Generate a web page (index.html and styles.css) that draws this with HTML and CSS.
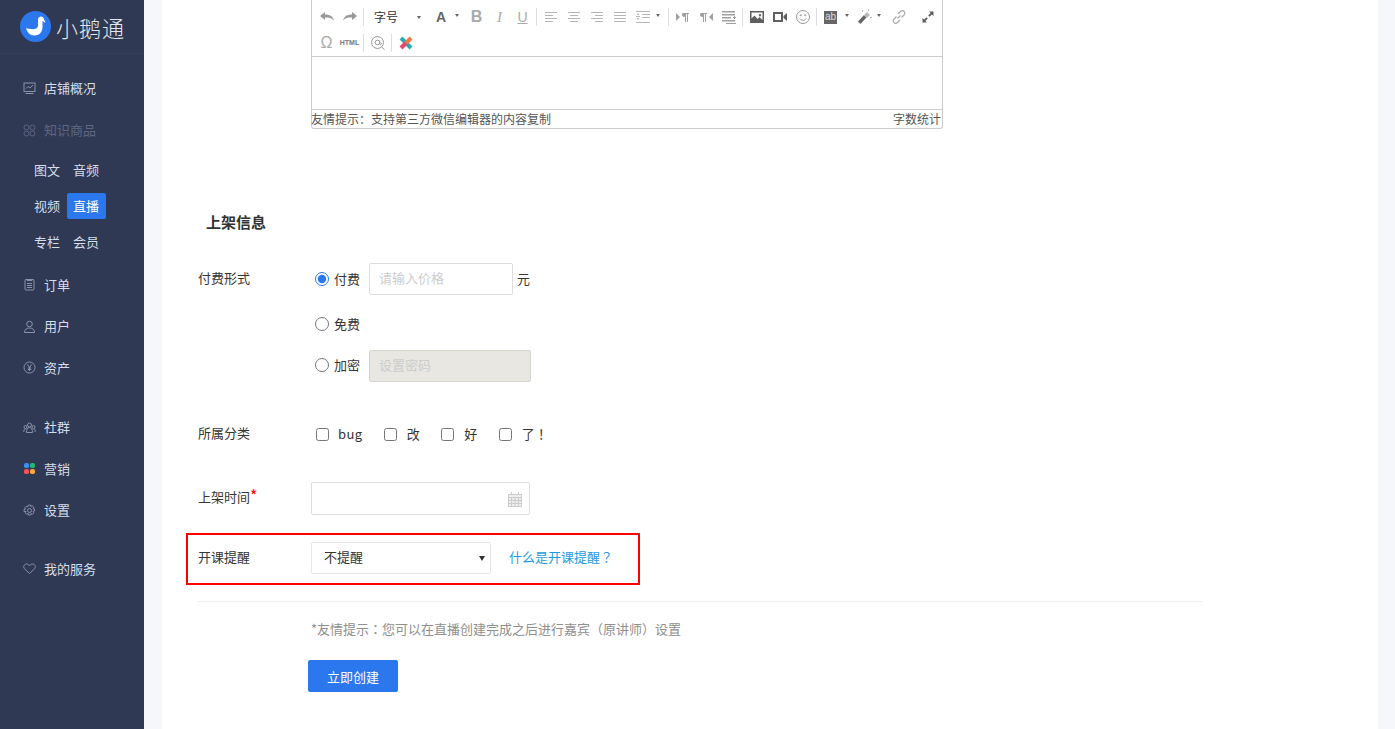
FILE: index.html
```html
<!DOCTYPE html>
<html lang="zh-CN">
<head>
    <meta charset="UTF-8">
    <meta name="viewport" content="width=device-width, initial-scale=1.0">
    <title>小鹅通</title>
    <link rel="stylesheet" href="styles.css">
</head>
<body>
<aside class="sidebar">
    <div class="logo">
        <svg class="logo-mark" width="31" height="31" viewBox="0 0 31 31">
            <circle cx="15.500" cy="15.500" r="15.500" fill="#2b77ee"/>
            <path d="M6 17c3 1.200 7 1.500 9.500.8 2-.6 2.500-2 2.500-4V9c0-2 1.300-3.500 3-3.500 1.500 0 2.500 1 3 2.500l1.500 4-3-2v6c0 5-3.500 8.500-8 8.500-4.500 0-8-3.500-8.500-8.500z" fill="#fff"/>
        </svg>
        <span class="logo-text">小鹅通</span>
    </div>
    <nav class="menu">
        <a class="menu-item">
            <svg class="menu-icon" viewBox="0 0 13 13" fill="none" stroke="#8a93aa"><rect x="1" y="1" width="11" height="8.500"/><path d="M3 6.500l2-2 2 1.500 3-3M2.500 11.500h8"/></svg>
            店铺概况
        </a>
        <a class="menu-item is-disabled">
            <svg class="menu-icon" viewBox="0 0 13 13" fill="none" stroke="#5d6783"><circle cx="3.500" cy="3.500" r="2.500"/><circle cx="9.500" cy="3.500" r="2.500"/><circle cx="3.500" cy="9.500" r="2.500"/><circle cx="9.500" cy="9.500" r="2.500"/></svg>
            知识商品
        </a>
        <div class="submenu">
            <a class="sub-item">图文</a><a class="sub-item">音频</a>
            <a class="sub-item">视频</a><a class="sub-item is-active">直播</a>
            <a class="sub-item">专栏</a><a class="sub-item">会员</a>
        </div>
        <div class="menu-group">
            <a class="menu-item">
                <svg class="menu-icon" viewBox="0 0 13 13" fill="none" stroke="#8a93aa"><rect x="2" y="1.500" width="9" height="10.500" rx="1"/><path d="M4 1v1.500h5V1M4 5.500h5M4 7.500h5M4 9.500h5"/></svg>
                订单
            </a>
            <a class="menu-item">
                <svg class="menu-icon" viewBox="0 0 13 13" fill="none" stroke="#8a93aa"><circle cx="6.500" cy="4" r="2.800"/><path d="M1.500 12.500c0-3 2-4.500 5-4.500s5 1.500 5 4.500z"/></svg>
                用户
            </a>
            <a class="menu-item">
                <svg class="menu-icon" viewBox="0 0 13 13" fill="none" stroke="#8a93aa"><circle cx="6.500" cy="6.500" r="5.500"/><path d="M4.500 3.500l2 3 2-3M6.500 6.500v3.500M4.800 7h3.400M4.800 8.500h3.400"/></svg>
                资产
            </a>
        </div>
        <div class="menu-group">
            <a class="menu-item">
                <svg class="menu-icon" viewBox="0 0 13 13" fill="none" stroke="#8a93aa"><circle cx="6.500" cy="4" r="2"/><circle cx="2.500" cy="6" r="1.500"/><circle cx="10.500" cy="6" r="1.500"/><path d="M3.500 11.500c0-3 1-5 3-5s3 2 3 5zM1 11c-.5-1.500 0-3 1.500-3M12 11c.5-1.500 0-3-1.500-3"/></svg>
                社群
            </a>
            <a class="menu-item">
                <svg class="menu-icon" viewBox="0 0 13 13"><rect x="1" y="1" width="5" height="5" rx="1.800" fill="#3f8ef0"/><rect x="7" y="1" width="5" height="5" rx="1.800" fill="#25b772"/><rect x="1" y="7" width="5" height="5" rx="1.800" fill="#f0555a"/><rect x="7" y="7" width="5" height="5" rx="1.800" fill="#f5a83c"/></svg>
                营销
            </a>
            <a class="menu-item">
                <svg class="menu-icon" viewBox="0 0 13 13" fill="none" stroke="#8a93aa"><circle cx="6.500" cy="6.500" r="2"/><path d="M5.500 1h2l.4 1.500 1.400-.7 1.500 1.500-.8 1.300 1.500.4v2l-1.500.4.800 1.400-1.500 1.500-1.400-.8-.4 1.500h-2l-.4-1.500-1.400.8-1.500-1.500.8-1.400L1 7.500v-2l1.500-.4-.8-1.300 1.500-1.500 1.400.7z"/></svg>
                设置
            </a>
        </div>
        <div class="menu-group">
            <a class="menu-item">
                <svg class="menu-icon" viewBox="0 0 13 13" fill="none" stroke="#8a93aa"><path d="M6.500 11.500L1.500 6.800C0 5 .8 2 3.500 2c1.300 0 2.300.7 3 1.800C7.200 2.700 8.200 2 9.500 2c2.700 0 3.500 3 2 4.800z"/></svg>
                我的服务
            </a>
        </div>
    </nav>
</aside>

<main class="content">
    <div class="card">
        <div class="editor">
            <div class="toolbar">
                <div class="tb-row">
                    <span class="tb-btn"><svg class="tb-icon" viewBox="0 0 16 16"><path d="M1 7l5-4v2.500c5 0 8 2 9 6-2-2.500-5-3-9-3V11z"/></svg></span>
                    <span class="tb-btn"><svg class="tb-icon" viewBox="0 0 16 16"><path d="M15 7l-5-4v2.500c-5 0-8 2-9 6 2-2.500 5-3 9-3V11z"/></svg></span>
                    <span class="tb-sep"></span>
                    <span class="tb-font">字号<i class="caret"></i></span>
                    <span class="tb-btn has-caret"><span class="tb-letter tb-a">A</span><i class="caret"></i></span>
                    <span class="tb-btn"><span class="tb-letter tb-b">B</span></span>
                    <span class="tb-btn"><span class="tb-letter tb-i">I</span></span>
                    <span class="tb-btn"><span class="tb-letter tb-u">U</span></span>
                    <span class="tb-sep"></span>
                    <span class="tb-btn"><svg class="tb-icon light" viewBox="0 0 16 16"><path d="M2 3h12v1H2zM2 6h8v1H2zM2 9h12v1H2zM2 12h8v1H2z"/></svg></span>
                    <span class="tb-btn"><svg class="tb-icon light" viewBox="0 0 16 16"><path d="M2 3h12v1H2zM4 6h8v1H4zM2 9h12v1H2zM4 12h8v1H4z"/></svg></span>
                    <span class="tb-btn"><svg class="tb-icon light" viewBox="0 0 16 16"><path d="M2 3h12v1H2zM6 6h8v1H6zM2 9h12v1H2zM6 12h8v1H6z"/></svg></span>
                    <span class="tb-btn"><svg class="tb-icon light" viewBox="0 0 16 16"><path d="M2 3h12v1H2zM2 6h12v1H2zM2 9h12v1H2zM2 12h12v1H2z"/></svg></span>
                    <span class="tb-btn has-caret"><svg class="tb-icon light" viewBox="0 0 16 16"><path d="M1 2h14v1H1zM7 5h8v1H7zM7 8h8v1H7zM1 13h14v1H1zM1 7h4v1H1zM3 4l1.500 2h-3zM3 11L1.500 9h3z"/></svg><i class="caret"></i></span>
                    <span class="tb-sep"></span>
                    <span class="tb-btn"><svg class="tb-icon mid" viewBox="0 0 16 16"><path d="M1 4l4 4-4 4zM8 4h6v1h-1v8h-1V5h-1v8h-1V8C8 8 7 7 7 6s0-2 1-2z"/></svg></span>
                    <span class="tb-btn"><svg class="tb-icon mid" viewBox="0 0 16 16"><path d="M15 4l-4 4 4 4zM3 4h6v1H8v8H7V5H6v8H5V8C3 8 2 7 2 6s0-2 1-2z"/></svg></span>
                    <span class="tb-btn"><svg class="tb-icon mid" viewBox="0 0 16 16"><path d="M1 2h13v1.500H1zM1 5h13v1.500H1zM1 8h9v1.500H1zM1 11h13v1.500H1zM5 14h10v1H5zM12 8h1V7h1v1h1v1h-1v1h-1V9h-1z"/></svg></span>
                    <span class="tb-sep"></span>
                    <span class="tb-btn"><svg class="tb-icon dark" viewBox="0 0 16 16"><path fill-rule="evenodd" d="M1 2h14v12H1zM2.500 3.500v6l3-3 3 3.500 2-2 3 3V3.500zM11 5a1.200 1.200 0 100 2.400A1.200 1.200 0 0011 5z"/></svg></span>
                    <span class="tb-btn"><svg class="tb-icon dark" viewBox="0 0 16 16"><path fill-rule="evenodd" d="M1 3h10v10H1zM3 5v6h6V5zM11.500 7L15 4v8l-3.500-3z"/></svg></span>
                    <span class="tb-btn"><svg class="tb-icon line" viewBox="0 0 16 16" stroke="#9a9a9a"><circle cx="8" cy="8" r="6.500"/><circle cx="5.800" cy="6.300" r=".6"/><circle cx="10.200" cy="6.300" r=".6"/><path d="M4.800 9.500c1.500 2.500 5 2.500 6.400 0"/></svg></span>
                    <span class="tb-sep tb-sep-wide"></span>
                    <span class="tb-btn has-caret narrow"><span class="tb-ab">ab</span><i class="caret"></i></span>
                    <span class="tb-btn has-caret"><svg class="tb-icon plain" viewBox="0 0 16 16"><path fill="#666" d="M8 6l2.500 2.500L4.500 15 2 12.500z"/><path fill="#bbb" d="M11 3l3 3-3 3-3-3z"/><path fill="#bbb" d="M6 1h1v2H6zM12 0h1v2h-1zM14 8h2v1h-2z"/></svg><i class="caret"></i></span>
                    <span class="tb-btn"><svg class="tb-icon line" viewBox="0 0 16 16" stroke="#aaa" stroke-width="1.200"><path d="M6.500 9.500l3-3M7 5l2.500-2.500c1-1 2.500-1 3.500 0s1 2.500 0 3.500L10.500 8.500M9 11l-2.500 2.500c-1 1-2.500 1-3.500 0s-1-2.500 0-3.500L5.500 7.500"/></svg></span>
                    <span class="tb-btn tb-expand"><svg class="tb-icon dark" viewBox="0 0 16 16"><path d="M9 2.500h4.500V7l-1.600-1.600-2.400 2.400-1.300-1.300 2.400-2.400zM7 13.500H2.500V9l1.600 1.600 2.400-2.400 1.300 1.300-2.400 2.400z"/></svg></span>
                </div>
                <div class="tb-row">
                    <span class="tb-btn"><span class="tb-letter tb-omega">Ω</span></span>
                    <span class="tb-btn"><span class="tb-html">HTML</span></span>
                    <span class="tb-sep"></span>
                    <span class="tb-btn"><svg class="tb-icon line" viewBox="0 0 16 16" stroke="#999"><circle cx="7.500" cy="7.500" r="6"/><circle cx="7.500" cy="7.500" r="2.300"/><path d="M9.800 5.500v3.500c0 1 1.700 1 1.700-1M11.500 12l3 2.500"/></svg></span>
                    <span class="tb-sep"></span>
                    <span class="tb-btn"><svg class="tb-icon line" viewBox="0 0 16 16" stroke-width="4"><path d="M3 3l10 10" stroke="#2fa8b5"/><path d="M8 8l-5 5" stroke="#e9446a"/><path d="M13 3L8 8" stroke="#ef7b45"/></svg></span>
                </div>
            </div>
            <div class="editor-body"></div>
            <div class="editor-foot">
                <span>友情提示：支持第三方微信编辑器的内容复制</span>
                <span>字数统计</span>
            </div>
        </div>

        <h3 class="section-title">上架信息</h3>

        <div class="form-row row-pay">
            <label class="form-label">付费形式</label>
            <div class="field">
                <label class="radio"><input type="radio" name="pay" checked>付费</label>
                <input class="text-input price-input" type="text" placeholder="请输入价格">
                <span class="unit">元</span>
            </div>
        </div>
        <div class="form-row row-free">
            <span class="form-label"></span>
            <div class="field">
                <label class="radio"><input type="radio" name="pay">免费</label>
            </div>
        </div>
        <div class="form-row row-secret">
            <span class="form-label"></span>
            <div class="field">
                <label class="radio"><input type="radio" name="pay">加密</label>
                <input class="text-input secret-input" type="text" placeholder="设置密码" disabled>
            </div>
        </div>

        <div class="form-row row-category">
            <label class="form-label">所属分类</label>
            <div class="field check-list">
                <label class="check"><input type="checkbox"><span class="check-bug">bug</span></label>
                <label class="check"><input type="checkbox">改</label>
                <label class="check"><input type="checkbox">好</label>
                <label class="check"><input type="checkbox"><span>了<span class="punct" lang="zh-TW">！</span></span></label>
            </div>
        </div>

        <div class="form-row row-time">
            <label class="form-label">上架时间<em class="required">*</em></label>
            <div class="date-field">
                <input class="text-input date-input" type="text">
                <svg class="date-icon" width="14" height="15" viewBox="0 0 14 15" fill="none" stroke="#ccc"><rect x=".5" y="2.500" width="13" height="12" fill="#eee"/><path d="M3.500 0v3M10.500 0v3M.5 5.500h13M.5 8.500h13M.5 11.500h13M3.500 5.500v9M7 5.500v9M10.500 5.500v9"/></svg>
            </div>
        </div>

        <div class="form-row row-remind">
            <label class="form-label">开课提醒</label>
            <div class="select-wrap">
                <select class="remind-select"><option>不提醒</option></select>
            </div>
            <a class="help-link">什么是开课提醒<span class="punct" lang="zh-TW">？</span></a>
        </div>

        <div class="divider"></div>
        <p class="hint">*友情提示<span class="punct" lang="zh-TW">：</span>您可以在直播创建完成之后进行嘉宾（原讲师）设置</p>
        <button class="submit-btn" type="button">立即创建</button>
    </div>
</main>
</body>
</html>
```

FILE: styles.css
```css
* {
    box-sizing: border-box;
}
html, body {
    height: 100%;
}
body {
    margin: 0;
    display: flex;
    overflow: hidden;
    background-color: #f5f7fb;
    color: #353535;
    font-family: "Noto Sans CJK SC", "Noto Sans", sans-serif;
    font-size: 13px;
    line-height: 20px;
}
.punct {
    font-family: "Noto Sans CJK TC", sans-serif;
}

/* sidebar */
.sidebar {
    width: 144px;
    flex-shrink: 0;
    background-color: #2f3954;
}
.logo {
    height: 54px;
    display: flex;
    align-items: center;
    padding-left: 20px;
    gap: 5px;
    border-bottom: 1px solid #363f5a;
}
.logo-text {
    font-size: 22px;
    font-weight: 300;
    letter-spacing: 1px;
    color: #e3e6ec;
}
.menu {
    padding-top: 13px;
}
.menu-item {
    display: flex;
    align-items: center;
    gap: 8px;
    height: 42px;
    padding-left: 23px;
    color: #d5dcec;
}
.menu-item.is-disabled {
    color: #5d6783;
}
.menu-icon {
    width: 13px;
    height: 13px;
}
.submenu {
    display: grid;
    grid-template-columns: 39px 39px;
    grid-auto-rows: 36px;
    align-items: center;
    padding: 1px 0 0 28px;
    margin-bottom: 4px;
}
.sub-item {
    height: 26px;
    padding-right: 1px;
    line-height: 25px;
    text-align: center;
    color: #d5dcec;
}
.sub-item.is-active {
    background-color: #2b77ee;
    color: #fff;
    border-radius: 2px;
}
.menu-group + .menu-group {
    margin-top: 18px;
}
.menu-group + .menu-group:last-child {
    margin-top: 17px;
}
.menu-group .menu-item {
    height: 41.500px;
}

/* main card */
.content {
    flex: 1;
    padding: 0 17px 0 18px;
}
.card {
    height: 100%;
    background-color: #fff;
    padding-left: 36px;
}

/* editor */
.editor {
    width: 632px;
    height: 129px;
    margin-left: 113px;
    border: 1px solid #ccc;
    border-top: none;
    border-radius: 0 0 3px 3px;
    display: flex;
    flex-direction: column;
}
.toolbar {
    height: 57px;
    padding: 4px 0 0 3px;
    border-bottom: 1px solid #ccc;
}
.tb-row {
    display: flex;
    align-items: center;
    height: 26px;
}
.tb-btn {
    position: relative;
    width: 23px;
    height: 26px;
    flex-shrink: 0;
    display: flex;
    align-items: center;
    justify-content: center;
}
.tb-btn.has-caret {
    width: 35px;
    justify-content: flex-start;
    padding-left: 4px;
}
.tb-btn.narrow {
    width: 32px;
}
.tb-icon {
    width: 16px;
    height: 16px;
    fill: #9a9a9a;
}
.tb-icon.light {
    fill: #b5b5b5;
}
.tb-icon.mid {
    fill: #a0a0a0;
}
.tb-icon.dark {
    fill: #5f5f5f;
}
.tb-icon.line {
    fill: none;
}
.tb-sep {
    width: 1px;
    height: 18px;
    margin: 0 2px;
    background-color: #ddd;
    flex-shrink: 0;
}
.tb-sep-wide {
    margin-right: 3px;
}
.tb-expand {
    margin-left: 6px;
}
.tb-font {
    position: relative;
    width: 64px;
    padding-left: 8px;
    font-size: 12px;
    color: #333;
    flex-shrink: 0;
}
.caret {
    position: absolute;
    top: 50%;
    left: 25px;
    margin-top: -3px;
    border: 2.500px solid transparent;
    border-top: 3px solid #666;
    border-bottom: none;
}
.tb-font .caret {
    left: 51px;
    margin-top: -1px;
}
.tb-letter {
    font-family: "Liberation Sans", sans-serif;
    color: #aaa;
}
.tb-a {
    padding-left: 2px;
    font-size: 14px;
    font-weight: bold;
    color: #666;
}
.tb-b {
    font-size: 16px;
    font-weight: bold;
}
.tb-i {
    font-family: "Liberation Serif", serif;
    font-size: 15px;
    font-style: italic;
}
.tb-u {
    font-size: 14px;
    text-decoration: underline;
}
.tb-omega {
    font-size: 16px;
}
.tb-html {
    font-family: "Liberation Sans", sans-serif;
    font-size: 7px;
    font-weight: bold;
    color: #777;
}
.tb-ab {
    width: 13px;
    height: 13px;
    line-height: 12px;
    text-align: center;
    background-color: #666;
    color: #ddd;
    font-family: "Liberation Sans", sans-serif;
    font-size: 10px;
}
.editor-body {
    height: 53px;
    border-bottom: 1px solid #ccc;
}
.editor-foot {
    flex: 1;
    display: flex;
    justify-content: space-between;
    padding-right: 1px;
    margin-left: -1px;
    line-height: 18px;
    font-size: 12px;
    color: #555;
}

/* form */
.section-title {
    margin: 83px 0 31px 8px;
    font-size: 15px;
    line-height: 20px;
    font-weight: bold;
    color: #333;
}
.form-row {
    display: flex;
    align-items: center;
}
.form-label {
    width: 113px;
    flex-shrink: 0;
    margin-top: -2px;
    color: #353535;
}
.required {
    color: #f00;
    font-style: normal;
    font-size: 16px;
    line-height: 0;
}
.field {
    display: flex;
    align-items: center;
    padding-left: 4px;
}
.radio {
    display: flex;
    align-items: center;
    gap: 5px;
    margin-right: 9px;
}
.radio input {
    width: 14px;
    height: 14px;
    margin: -1px 0 0;
    accent-color: #2b77ee;
}
.text-input {
    height: 32px;
    padding: 0 9px 3px;
    border: 1px solid #ddd;
    border-radius: 2px;
    font-family: inherit;
    font-size: 13px;
    outline: none;
}
.text-input::placeholder {
    color: #ccc;
}
.price-input {
    width: 144px;
}
.unit {
    margin-left: 4px;
}
.row-free {
    margin-top: 19px;
}
.row-secret {
    margin-top: 16px;
}
.row-secret .radio {
    margin-top: -2px;
}
.secret-input {
    width: 162px;
    background-color: #e8e7e1;
    border-color: #d5d5d0;
}
.row-category {
    margin-top: 42px;
}
.check-list {
    padding-left: 5px;
}
.check {
    display: flex;
    align-items: center;
    gap: 10px;
    margin-right: 21.500px;
}
.check input {
    width: 13px;
    height: 13px;
    margin: 0;
}
.check-bug {
    margin-left: -1px;
    letter-spacing: .35px;
}
.row-time {
    margin-top: 38px;
}
.row-time .form-label {
    margin-top: -3px;
}
.date-field {
    position: relative;
}
.date-input {
    width: 219px;
    height: 33px;
    display: block;
}
.date-icon {
    position: absolute;
    top: 10px;
    right: 8px;
}
.row-remind {
    width: 454px;
    margin: 18px 0 0 -12px;
    padding: 7px 0 9px 10px;
    border: 2px solid #f00;
}
.select-wrap {
    position: relative;
    width: 180px;
    height: 32px;
}
.select-wrap::after {
    content: "";
    position: absolute;
    top: 14px;
    right: 6px;
    border: 3px solid transparent;
    border-top: 5px solid #333;
    border-bottom: none;
}
.remind-select {
    appearance: none;
    width: 100%;
    height: 100%;
    padding: 0 12px 4px;
    background-color: #fff;
    border: 1px solid #e3e6ef;
    border-radius: 2px;
    font-family: inherit;
    font-size: 13px;
    color: #353535;
}
.help-link {
    margin: -2px 0 0 18px;
    color: #1e9ae0;
}
.divider {
    width: 1004px;
    height: 1px;
    margin-top: 16px;
    background-color: #eee;
}
.hint {
    margin: 17px 0 21px 113px;
    color: #8f8f8f;
}
.submit-btn {
    display: block;
    width: 90px;
    height: 32px;
    margin-left: 110px;
    background-color: #2b77ee;
    color: #fff;
    border: none;
    border-radius: 2px;
    font-family: inherit;
    font-size: 13px;
    cursor: pointer;
}
```
